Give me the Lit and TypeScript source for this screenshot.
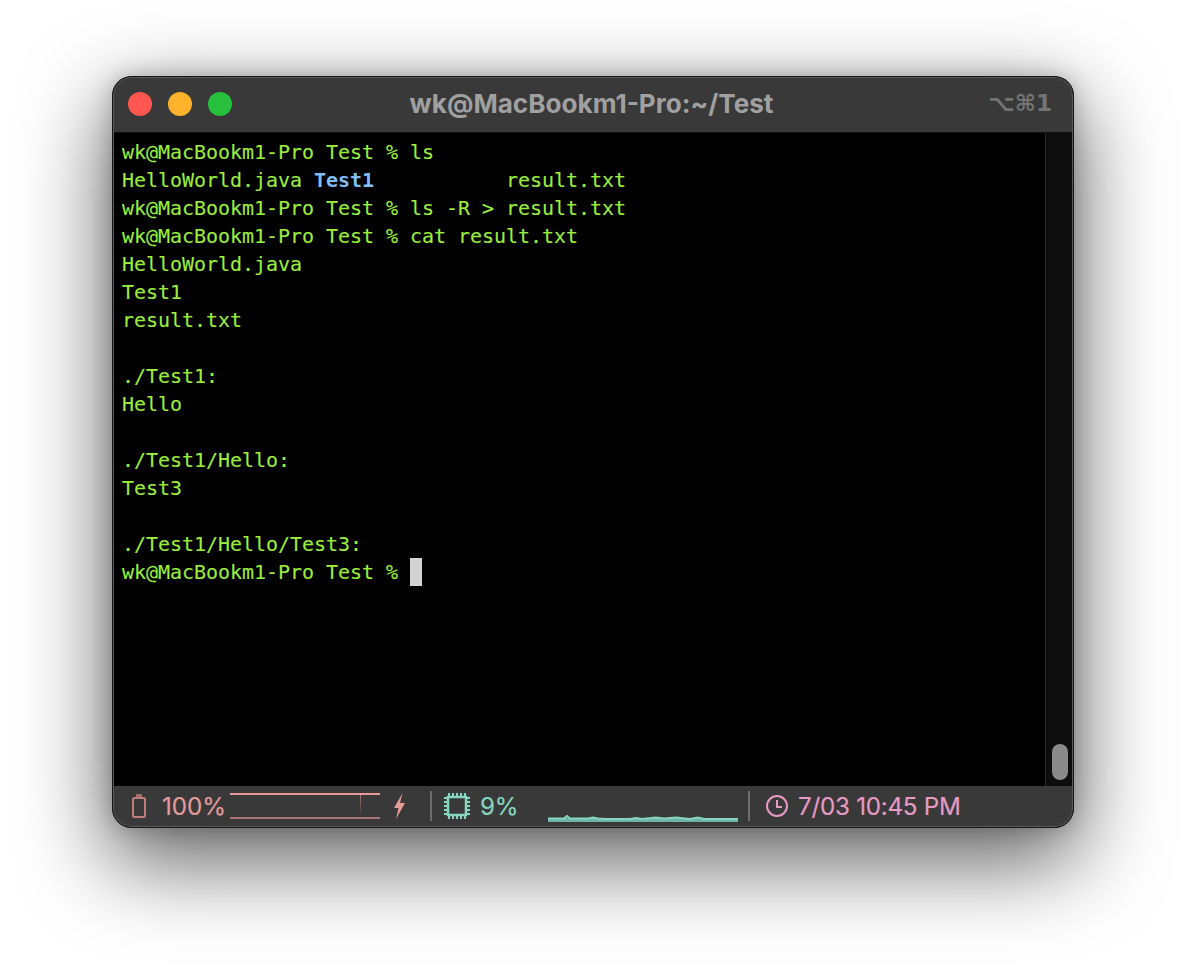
import { LitElement, html, css } from "lit";
import { customElement } from "lit/decorators.js";

const lines: unknown[] = [
  "wk@MacBookm1-Pro Test % ls",
  html`HelloWorld.java <b class="dir">Test1</b>           result.txt`,
  "wk@MacBookm1-Pro Test % ls -R > result.txt",
  "wk@MacBookm1-Pro Test % cat result.txt",
  "HelloWorld.java",
  "Test1",
  "result.txt",
  "",
  "./Test1:",
  "Hello",
  "",
  "./Test1/Hello:",
  "Test3",
  "",
  "./Test1/Hello/Test3:",
  html`wk@MacBookm1-Pro Test % <span class="cursor"></span>`,
];

const ticks = [5, 9, 13, 17, 21];
const cpuTicks = ticks
  .map((p) => `M${p} 0v4M${p} 22v4M0 ${p}h4M22 ${p}h4`)
  .join("");

@customElement("app-root")
export class AppRoot extends LitElement {
  static styles = css`
    :host { display: block; width: 1186px; height: 976px; background: #fff; overflow: hidden; }
    .page { padding: 76px 112px 0; }
    .window {
      width: 962px; height: 752px; box-sizing: border-box; display: flex; flex-direction: column;
      border-radius: 20px; overflow: hidden; background: #393939; position: relative;
      box-shadow: 0 30px 85px 6px rgba(0,0,0,.6), 0 0 22px rgba(0,0,0,.22);
    }
    .edge {
      position: absolute; inset: 0; border-radius: 20px; border: 1px solid #151515; pointer-events: none;
      box-shadow: inset 0 0 0 1px #5a5a5a; z-index: 3;
    }
    .title {
      height: 56px; flex: none; display: grid; grid-template-columns: 1fr auto 1fr; align-items: center;
      padding: 0 22px 0 16px; border-bottom: 1px solid #111; background: #393939;
    }
    .lights { display: flex; gap: 16px; }
    .lights i { width: 24px; height: 24px; border-radius: 50%; display: block; }
    .red { background: #ff5650; }
    .amber { background: #ffb32b; }
    .green { background: #27c03c; }
    .t { font: 700 26.1px "Inter", "Liberation Sans", sans-serif; color: #a0a0a0; margin: -2px 0 0 3px; }
    .keys { justify-self: end; font: 700 23px "DejaVu Sans", sans-serif; color: #747474; margin-top: -3px; }
    .body { flex: 1; display: flex; min-height: 0; background: #000; }
    .term {
      flex: 1; padding: 5px 0 0 10px; font: 20px/28px "DejaVu Sans Mono", monospace;
      color: #9cee3c; white-space: pre; letter-spacing: -0.04px; min-width: 0;
      -webkit-text-stroke: 0.1px currentColor;
    }
    .ln { height: 28px; }
    .dir { color: #82bdfb; font-weight: 700; -webkit-text-stroke: 0; }
    .cursor { display: inline-block; width: 12px; height: 28px; background: #d4d4d4; vertical-align: top; }
    .track {
      width: 29px; flex: none; background: #0d0d0d; border-left: 1px solid #262626; display: flex;
      justify-content: center; align-items: flex-end; padding: 0 1px 6px 0; box-sizing: border-box;
    }
    .thumb { width: 16px; height: 36px; border-radius: 8px; background: #8a8a8a; }
    .status {
      height: 42px; flex: none; display: flex; align-items: center; background: #393939;
      font: 24.2px "Inter", "Liberation Sans", sans-serif; letter-spacing: -0.15px; padding: 0 0 2px 20px;
      box-sizing: border-box; -webkit-text-stroke: 0.15px currentColor;
    }
    .status svg { display: block; flex: none; }
    .sep { width: 2px; height: 30px; background: #6d6d6d; flex: none; }
    .pink { color: #e49b9b; margin-left: 16px; width: 68px; letter-spacing: 0; }
    .teal { color: #85d6bf; margin-left: 10px; width: 68px; }
    .rose { color: #e79ac4; margin-left: 10px; letter-spacing: -0.25px; }
    .bolt { margin-left: 13px; }
    .sep-a { margin-left: 24px; }
    .cpu { margin-left: 12px; }
    .cpu-graph { margin-top: 24px; }
    .sep-b { margin-left: 10px; }
    .clock { margin-left: 16px; }
  `;

  render() {
    return html`<div class="page"><div class="window">
      <div class="edge"></div>
      <div class="title">
        <div class="lights"><i class="red"></i><i class="amber"></i><i class="green"></i></div>
        <div class="t">wk@MacBookm1-Pro:~/Test</div>
        <div class="keys">⌥⌘1</div>
      </div>
      <div class="body">
        <div class="term">${lines.map((l) => html`<div class="ln">${l}</div>`)}</div>
        <div class="track"><div class="thumb"></div></div>
      </div>
      <div class="status">
        <svg width="14" height="26" viewBox="0 0 14 26" fill="none" stroke="#bf7d7d" stroke-width="2">
          <path d="M4 1h6v4H4z" fill="#a66c6c" stroke="none"/><rect x="1" y="5" width="12" height="19" rx="1.5"/>
        </svg>
        <span class="pink">100%</span>
        <svg class="batt-graph" width="150" height="26" viewBox="0 0 150 26">
          <defs><linearGradient id="sp" x1="0" y1="0" x2="0" y2="1">
            <stop offset="0" stop-color="#a87373"/><stop offset="1" stop-color="#393939"/>
          </linearGradient></defs>
          <rect x="130" y="2" width="1" height="20" fill="url(#sp)"/>
          <rect y="0" width="150" height="2" fill="#e69a9a"/>
          <rect y="24" width="150" height="2" fill="#a87373"/>
        </svg>
        <svg class="bolt" width="13" height="26" viewBox="0 0 13 26"><path d="M9.500 0 1 15h4.500L3 26 12 10H7z" fill="#e49b9b"/></svg>
        <div class="sep sep-a"></div>
        <svg class="cpu" width="26" height="26" viewBox="0 0 26 26" fill="none" stroke="#85d6bf" stroke-width="2">
          <rect x="4" y="4" width="18" height="18" stroke-width="2.5"/>
          <path d="${cpuTicks}"/>
        </svg>
        <span class="teal">9%</span>
        <svg class="cpu-graph" width="190" height="7" viewBox="0 0 190 7">
          <rect y="3" width="190" height="4" fill="#70b5a2"/>
          <path d="M0 3.500H16l3-2.500 3 2.500H40l5-1 5 1 8 .5H82l6-1 6 1 14-1.500 8 1 12-1 14 1.500 8-1.500 6 1.500H190" fill="none" stroke="#85d6bf" stroke-width="2"/>
        </svg>
        <div class="sep sep-b"></div>
        <svg class="clock" width="22" height="22" viewBox="0 0 22 22" fill="none" stroke="#e79ac4" stroke-width="2">
          <circle cx="11" cy="11" r="10"/><path d="M11 5v7h5"/>
        </svg>
        <span class="rose">7/03 10:45 PM</span>
      </div>
    </div></div>`;
  }
}
